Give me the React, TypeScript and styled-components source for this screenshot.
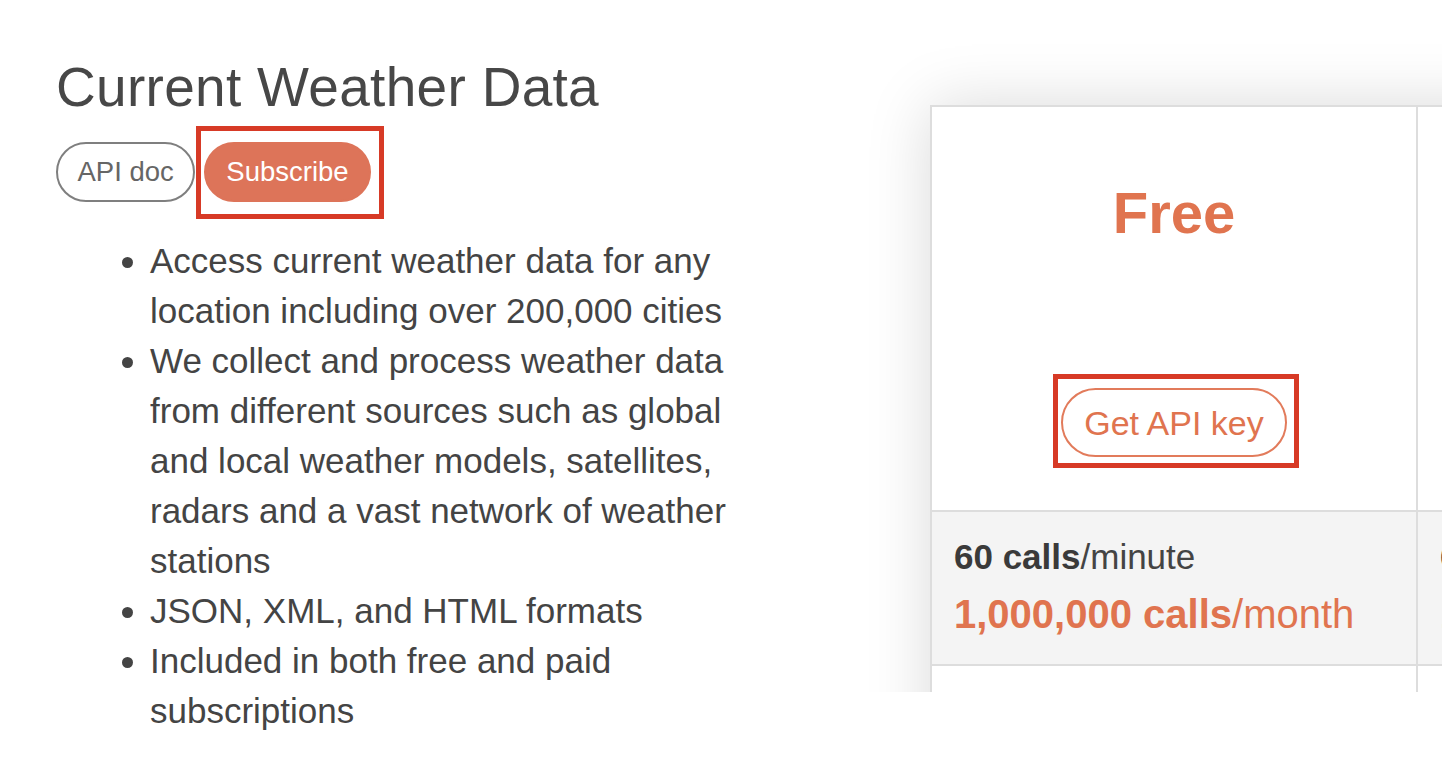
import React from "react";
import styled, { createGlobalStyle } from "styled-components";

const GlobalStyle = createGlobalStyle`
  html, body {
    margin: 0;
    padding: 0;
    background: #ffffff;
    overflow: hidden;
  }
  body {
    font-family: "Liberation Sans", Arial, Helvetica, sans-serif;
    color: #444444;
  }
  *, *::before, *::after {
    box-sizing: border-box;
  }
`;

const ORANGE = "#e0744f";
const ORANGE_FILL = "#dd7459";
const LINE = "#dddddd";

const Page = styled.div`
  display: grid;
  grid-template-columns: 860px 1fr;
  width: 1442px;
  height: 760px;
`;

const Intro = styled.section`
  padding: 57px 0 0 56px;
`;

const Title = styled.h1`
  margin: 0;
  font-size: 55px;
  line-height: 60px;
  font-weight: 400;
  color: #474747;
  letter-spacing: 0.3px;
`;

const Actions = styled.div`
  display: flex;
  align-items: center;
  gap: 9px;
  margin-top: 25px;
`;

const Pill = styled.button<{ $solid?: boolean }>`
  height: 60px;
  padding: 0 ${(p) => (p.$solid ? "20px" : "19.5px")};
  border-radius: 30px;
  border: 2px solid ${(p) => (p.$solid ? ORANGE_FILL : "#7f7f7f")};
  background: ${(p) => (p.$solid ? ORANGE_FILL : "#ffffff")};
  color: ${(p) => (p.$solid ? "#ffffff" : "#666666")};
  font-family: inherit;
  font-size: 27.5px;
  line-height: 1;
  cursor: pointer;
`;

const Highlight = styled.span<{ $inset: string }>`
  position: relative;
  display: inline-flex;
  &::after {
    content: "";
    position: absolute;
    inset: ${(p) => p.$inset};
    border: 5px solid #d73a26;
    pointer-events: none;
  }
`;

const Features = styled.ul`
  margin: 34px 0 0;
  padding: 0 0 0 94px;
  width: 676px;
  font-size: 35px;
  line-height: 50px;
  color: #444444;
  list-style: disc;
`;

const Feature = styled.li`
  &::marker {
    color: #444444;
  }
`;

const PlanViewport = styled.section`
  height: 692px;
  min-width: 0;
  overflow: hidden;
`;

const PlanTable = styled.div`
  margin: 105px 0 0 70px;
  width: 1460px;
  display: grid;
  grid-template-columns: repeat(3, 486px);
  border-top: 2px solid ${LINE};
  border-left: 2px solid ${LINE};
  background: #ffffff;
  box-shadow: 0 0 60px rgba(0, 0, 0, 0.15);
`;

const Cell = styled.div`
  border-right: 2px solid ${LINE};
  border-bottom: 2px solid ${LINE};
`;

const HeaderCell = styled(Cell)`
  height: 405px;
  display: flex;
  flex-direction: column;
  align-items: center;
  padding-top: 77px;
`;

const PlanName = styled.h2`
  margin: 0;
  font-size: 58px;
  line-height: 58px;
  font-weight: 700;
  color: ${ORANGE};
`;

const PlanPrice = styled.div`
  margin-top: 18px;
  font-size: 30px;
  line-height: 40px;
  color: #444444;
`;

const ButtonSlot = styled.div<{ $offset: number }>`
  margin-top: ${(p) => p.$offset}px;
`;

const KeyButton = styled.button`
  height: 69px;
  padding: 0 21px;
  border-radius: 35px;
  border: 2px solid #e27b5b;
  background: #ffffff;
  color: ${ORANGE};
  font-family: inherit;
  font-size: 34px;
  line-height: 1;
  cursor: pointer;
`;

const LimitCell = styled(Cell)`
  height: 154px;
  padding: 21px 22px 0;
  background: #f4f4f4;
`;

const PerMinute = styled.div`
  font-size: 35px;
  line-height: 48px;
  color: #444444;
  white-space: nowrap;
  b {
    color: #3a3a3a;
  }
`;

const PerMonth = styled.div`
  margin-top: 5px;
  font-size: 40px;
  line-height: 56px;
  color: ${ORANGE};
  white-space: nowrap;
`;

const FeatureCell = styled(Cell)`
  padding: 44px 22px 24px;
  font-size: 30px;
  line-height: 44px;
  color: #444444;
`;

type Plan = {
  name: string;
  price?: string;
  minute: string;
  month: string;
  action: string;
  highlighted?: boolean;
};

const plans: Plan[] = [
  { name: "Free", minute: "60 calls", month: "1,000,000 calls", action: "Get API key", highlighted: true },
  { name: "Startup", price: "40 USD / month", minute: "600 calls", month: "10,000,000 calls", action: "Subscribe" },
  { name: "Developer", price: "180 USD / month", minute: "3,000 calls", month: "100,000,000 calls", action: "Subscribe" },
];

const features = [
  "Access current weather data for any location including over 200,000 cities",
  "We collect and process weather data from different sources such as global and local weather models, satellites, radars and a vast network of weather stations",
  "JSON, XML, and HTML formats",
  "Included in both free and paid subscriptions",
];

export default function App() {
  return (
    <>
      <GlobalStyle />
      <Page>
        <Intro>
          <Title>Current Weather Data</Title>
          <Actions>
            <Pill>API doc</Pill>
            <Highlight $inset="-16px -13px -17px -8px">
              <Pill $solid>Subscribe</Pill>
            </Highlight>
          </Actions>
          <Features>
            {features.map((f) => (
              <Feature key={f}>{f}</Feature>
            ))}
          </Features>
        </Intro>
        <PlanViewport>
          <PlanTable>
            {plans.map((p) => (
              <HeaderCell key={`h-${p.name}`}>
                <PlanName>{p.name}</PlanName>
                {p.price && <PlanPrice>{p.price}</PlanPrice>}
                <ButtonSlot $offset={p.price ? 88 : 146}>
                  {p.highlighted ? (
                    <Highlight $inset="-14px -12px -11px -8px">
                      <KeyButton>{p.action}</KeyButton>
                    </Highlight>
                  ) : (
                    <KeyButton>{p.action}</KeyButton>
                  )}
                </ButtonSlot>
              </HeaderCell>
            ))}
            {plans.map((p) => (
              <LimitCell key={`l-${p.name}`}>
                <PerMinute>
                  <b>{p.minute}</b>/minute
                </PerMinute>
                <PerMonth>
                  <b>{p.month}</b>/month
                </PerMonth>
              </LimitCell>
            ))}
            {plans.map((p) => (
              <FeatureCell key={`f-${p.name}`}>Current Weather</FeatureCell>
            ))}
          </PlanTable>
        </PlanViewport>
      </Page>
    </>
  );
}
